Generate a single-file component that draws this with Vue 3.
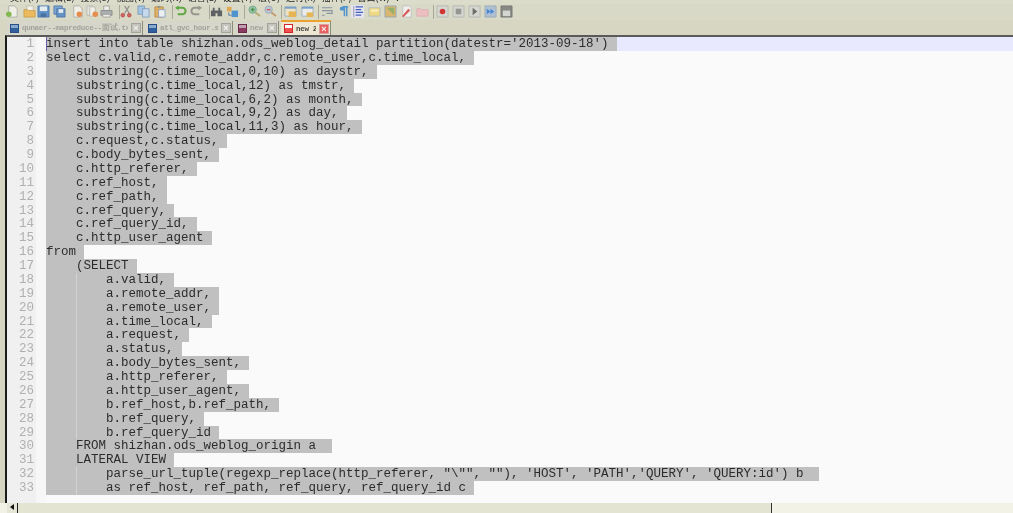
<script setup>
const menus = ['文件(F)', '编辑(E)', '搜索(S)', '视图(V)', '编码(N)', '语言(L)', '设置(T)', '宏(O)', '运行(R)', '插件(P)', '窗口(W)', '?']

const doc = { d: 'M3 1h6l3 3v9H3z', f: '#f4f4ee', s: '#9a9a9a' }
const floppy = [
  { d: 'M1 1h12v12H1z', f: '#4f86c6', s: '#2f5f9c' },
  { d: 'M3 1.5h8v5H3z', f: '#e8f0f8' },
  { d: 'M4 9h6v4H4z', f: '#2f5f9c' }
]
const icons = {
  new: [doc, { d: 'M0 10a3 3 0 1 0 6 0a3 3 0 1 0-6 0z', f: '#74b43c' }],
  open: [{ d: 'M4 1h7v6H4z', f: '#f6f6f0', s: '#b0b0a0' }, { d: 'M1 5h4l1 1h7v7H1z', f: '#eeb54a', s: '#c48b28' }],
  save: floppy,
  saveall: [{ d: 'M1 1h9v9H1z', f: '#6d9cd4', s: '#2f5f9c' }, { d: 'M4 4h9v9H4z', f: '#4f86c6', s: '#2f5f9c' }, { d: 'M6 4.5h5v4H6z', f: '#e8f0f8' }],
  close: [doc, { d: 'M6 10a3 3 0 1 0 6 0a3 3 0 1 0-6 0z', f: '#e8803a' }],
  closeall: [{ d: 'M1 1h6v10H1z', f: '#e8e8e4', s: '#a8a8a8' }, { d: 'M4 2h6v10H4z', f: '#f4f4ee', s: '#a8a8a8' }, { d: 'M7 10a3 3 0 1 0 6 0a3 3 0 1 0-6 0z', f: '#e8803a' }],
  print: [{ d: 'M4 1h6v5H4z', f: '#f0f0f0', s: '#8a8a8a' }, { d: 'M1 6h12v5H1z', f: '#a4a8ac', s: '#70757a' }, { d: 'M3 10h8v3H3z', f: '#eef0f0', s: '#8a8a8a' }],
  cut: [{ d: 'M10 1L5 9M5 1l5 8', s: '#8a8a8a', w: 1.4 }, { d: 'M1 11a2 2 0 1 0 4 0a2 2 0 1 0-4 0zM8 11a2 2 0 1 0 4 0a2 2 0 1 0-4 0z', f: '#d05050', s: '#b03030' }],
  copy: [{ d: 'M1 1h7v9H1z', f: '#9dc0ea', s: '#5f86b8' }, { d: 'M6 4h7v9H6z', f: '#c6daf2', s: '#5f86b8' }],
  paste: [{ d: 'M2 2h9v11H2z', f: '#e2a850', s: '#a87a30' }, { d: 'M5 1h3v2H5z', f: '#888' }, { d: 'M6 5h7v8H6z', f: '#eef3fa', s: '#6a8ab8' }],
  undo: [{ d: 'M4 3h5a3.5 3.5 0 0 1 0 7H4', s: '#4aa02c', w: 2.2 }, { d: 'M5 0.5L1 3l4 3z', f: '#4aa02c' }],
  redo: [{ d: 'M10 3H5a3.5 3.5 0 0 0 0 7h5', s: '#8c8c84', w: 2.2 }, { d: 'M9 0.5L13 3l-4 3z', f: '#8c8c84' }],
  find: [{ d: 'M1 6h5v6H1zM8 6h5v6H8zM3 3h2v3H3zM9 3h2v3H9zM5 6h4v3H5z', f: '#4a4e54' }],
  replace: [{ d: 'M1 2h5v5H1z', f: '#e0a040' }, { d: 'M6 6h7v7H6z', f: '#3a8ad0' }, { d: 'M3 8v3h3', s: '#3a6a90', w: 1 }],
  zoomin: [{ d: 'M1 5a4 4 0 1 0 8 0a4 4 0 1 0-8 0z', f: '#8ec0a8', s: '#5a9a78' }, { d: 'M8 8l5 4', s: '#b0a060', w: 2 }, { d: 'M3 5h4M5 3v4', s: '#2e8a2e', w: 1.4 }],
  zoomout: [{ d: 'M1 5a4 4 0 1 0 8 0a4 4 0 1 0-8 0z', f: '#b4c4d8', s: '#8a9ab0' }, { d: 'M8 8l5 4', s: '#c09060', w: 2 }, { d: 'M3 5h4', s: '#d04848', w: 1.4 }],
  syncv: [{ d: 'M1 2h12v10H1z', f: '#f2e6c4', s: '#7a98b8' }, { d: 'M1 2h12v2H1z', f: '#6a98cc' }, { d: 'M5 7h8v6H5z', f: '#eab040' }],
  synch: [{ d: 'M1 2h12v10H1z', f: '#eef0f2', s: '#7a98b8' }, { d: 'M1 2h12v2H1z', f: '#6a98cc' }, { d: 'M6 8h7v5H6z', f: '#eab040' }],
  wrap: [{ d: 'M1 3h11M1 6h11v3H6M1 11h3', s: '#7a8a9a', w: 1.2 }],
  chars: [{ d: 'M6 2h6M8 2v10M10.5 2v10', s: '#3a8ad0', w: 1.6 }, { d: 'M5 2h3v4H5a2 2 0 0 1 0-4z', f: '#3a8ad0' }],
  guide: [{ d: 'M0 0h14v14H0z', f: '#e8e8f8' }, { d: 'M3 1v12', s: '#8888a8', w: 1 }, { d: 'M5 2h8M5 5h6M5 8h8M5 11h6', s: '#2a4ac0', w: 1.4 }],
  mapdoc: [{ d: 'M1 3h12v9H1z', f: '#f4d878', s: '#9ab0c8' }, { d: 'M3 5h8v2H3z', f: '#fff4c0' }],
  map: [{ d: 'M1 1h12v12H1z', f: '#d8b060', s: '#7a98b8' }, { d: 'M3 3l8 8v-8z', f: '#88a858' }],
  fnlist: [{ d: 'M3 1h7l2 2v10H3z', f: '#f4f4f4', s: '#b8b8b8' }, { d: 'M2 12L9 4l2 2-7 7z', f: '#d84848' }],
  folder: [{ d: 'M1 4h4l1 1h7v7H1z', f: '#f0bcc0', s: '#d8a0a8' }],
  rec: [{ d: 'M1 1h12v12H1z', f: '#d4d6d4', s: '#a8a8a4' }, { d: 'M4 7a3 3 0 1 0 6 0a3 3 0 1 0-6 0z', f: '#d01818' }],
  stop: [{ d: 'M1 1h12v12H1z', f: '#d4d6d4', s: '#a8a8a4' }, { d: 'M4 4h6v6H4z', f: '#8a8a88' }],
  play: [{ d: 'M1 1h12v12H1z', f: '#d4d6d4', s: '#a8a8a4' }, { d: 'M5 3l5 4-5 4z', f: '#5c5c58' }],
  multi: [{ d: 'M1 1h12v12H1z', f: '#a8bcd4', s: '#8a9cb0' }, { d: 'M3 4l4 3-4 3zM7 4l4 3-4 3z', f: '#2a78d8' }],
  savem: [{ d: 'M1 1h12v12H1z', f: '#7a7c7a', s: '#5c5c5a' }, { d: 'M3 6h8v6H3z', f: '#d4d6d4' }]
}

const rawBar = [
  ['new', 13], ['open', 30], ['save', 44], ['saveall', 60], ['close', 78], ['closeall', 93], ['print', 107], ['|', 119],
  ['cut', 127], ['copy', 144], ['paste', 160], ['|', 172], ['undo', 181], ['redo', 197], ['|', 209], ['find', 217],
  ['replace', 233], ['|', 244], ['zoomin', 255], ['zoomout', 271], ['|', 281], ['syncv', 291], ['synch', 308], ['|', 318],
  ['wrap', 328], ['chars', 344], ['guide', 358], ['mapdoc', 375], ['map', 391], ['fnlist', 407], ['folder', 423], ['|', 433],
  ['rec', 443], ['stop', 459], ['play', 475], ['multi', 491], ['savem', 507]
]
const bar = rawBar.map(([k, x], i) => ({ k, w: i < rawBar.length - 1 ? rawBar[i + 1][1] - x : 14, shapes: icons[k] || [] }))

const tabs = [
  { t: 'qunaer--mapreduce--面试.txt', w: 136, color: 'blue' },
  { t: 'atl_gvc_hour.sh', w: 88, color: 'blue' },
  { t: 'new 1', w: 44, color: 'maroon' },
  { t: 'new 2', w: 50, color: 'red', active: true }
]

const code = [
  ["insert into table shizhan.ods_weblog_detail partition(datestr='2013-09-18')", 0],
  ['select c.valid,c.remote_addr,c.remote_user,c.time_local,', 0],
  ['substring(c.time_local,0,10) as daystr,', 1],
  ['substring(c.time_local,12) as tmstr,', 1],
  ['substring(c.time_local,6,2) as month,', 1],
  ['substring(c.time_local,9,2) as day,', 1],
  ['substring(c.time_local,11,3) as hour,', 1],
  ['c.request,c.status,', 1],
  ['c.body_bytes_sent,', 1],
  ['c.http_referer,', 1],
  ['c.ref_host,', 1],
  ['c.ref_path,', 1],
  ['c.ref_query,', 1],
  ['c.ref_query_id,', 1],
  ['c.http_user_agent', 1],
  ['from', 0],
  ['(SELECT', 1],
  ['a.valid,', 2],
  ['a.remote_addr,', 2],
  ['a.remote_user,', 2],
  ['a.time_local,', 2],
  ['a.request,', 2],
  ['a.status,', 2],
  ['a.body_bytes_sent,', 2],
  ['a.http_referer,', 2],
  ['a.http_user_agent,', 2],
  ['b.ref_host,b.ref_path,', 2],
  ['b.ref_query,', 2],
  ['b.ref_query_id', 2],
  ['FROM shizhan.ods_weblog_origin a ', 1],
  ['LATERAL VIEW', 1],
  ['parse_url_tuple(regexp_replace(http_referer, "\\"", ""), \'HOST\', \'PATH\',\'QUERY\', \'QUERY:id\') b ', 2],
  ['as ref_host, ref_path, ref_query, ref_query_id c', 2]
].map(([text, level]) => ({ text: '    '.repeat(level) + text, level }))
</script>

<template>
  <div class="app">
    <div class="menu">
      <span v-for="m in menus" :key="m" class="menu-item">{{ m }}</span>
    </div>

    <div class="toolbar">
      <div v-for="(b, i) in bar" :key="i" class="slot" :style="{ width: b.w + 'px' }">
        <i v-if="b.k === '|'" class="sep"></i>
        <svg v-else class="icon" width="13" height="13" viewBox="0 0 14 14">
          <path
            v-for="(s, j) in b.shapes"
            :key="j"
            :d="s.d"
            :fill="s.f || 'none'"
            :stroke="s.s || 'none'"
            :stroke-width="s.w || 0.8"
          />
        </svg>
      </div>
    </div>

    <div class="tabs">
      <div
        v-for="t in tabs"
        :key="t.t"
        class="tab"
        :class="{ active: t.active }"
        :style="{ width: t.w + 'px' }"
      >
        <span class="tab-icon" :class="t.color"></span>
        <span class="tab-text">{{ t.t }}</span>
        <span class="tab-close">×</span>
      </div>
    </div>

    <div class="editor">
      <div class="gutter">
        <div v-for="(l, i) in code" :key="i" class="num">{{ i + 1 }}</div>
      </div>
      <div class="fold"></div>
      <div class="code">
        <i class="caret"></i>
        <div
          v-for="(l, i) in code"
          :key="i"
          class="row"
          :class="{ current: i === 0 }"
        >
          <span class="sel" :class="'lv' + l.level">{{ l.text }}</span>
        </div>
      </div>
    </div>

    <div class="hscroll">
      <span class="arrow"></span>
      <div class="thumb"></div>
    </div>
  </div>
</template>

<style scoped>
.app {
  width: 1013px;
  height: 513px;
  display: flex;
  flex-direction: column;
  overflow: hidden;
  background: #d6d6c3;
  filter: blur(0.6px);
  font-family: "Liberation Mono", monospace;
}
.menu {
  height: 4px;
  flex: none;
  display: flex;
  align-items: flex-end;
  gap: 6px;
  padding-left: 10px;
  overflow: hidden;
  background: #dcdccb;
}
.menu-item {
  font: 9px/12px "Noto Sans CJK SC", sans-serif;
  color: #222;
  white-space: nowrap;
  flex: none;
}
.toolbar {
  height: 16px;
  flex: none;
  display: flex;
  align-items: center;
  padding-left: 6px;
  background: #d9d9c7;
}
.slot {
  flex: none;
  height: 14px;
}
.icon {
  display: block;
  opacity: 0.85;
}
.sep {
  display: block;
  width: 1px;
  height: 14px;
  margin-left: 7px;
  background: #a8a898;
}
.tabs {
  height: 15px;
  flex: none;
  display: flex;
  align-items: stretch;
  gap: 2px;
  padding-left: 7px;
  background: #d6d6c3;
}
.tab {
  flex: none;
  box-sizing: border-box;
  display: flex;
  align-items: center;
  gap: 3px;
  margin-top: 1px;
  padding: 0 1px 0 3px;
  background: #d6d6ca;
  border-right: 1px solid #8c8c80;
  color: #a2a29c;
  font-size: 7.5px;
  font-weight: bold;
  overflow: hidden;
  white-space: nowrap;
}
.tab.active {
  margin-top: 0;
  background: #ece6d2;
  border-top: 2px solid #eca030;
  border-right: 1px solid #8c8c80;
  color: #4a4a44;
}
.tab-icon {
  flex: none;
  width: 9px;
  height: 9px;
  box-sizing: border-box;
  border: 1px solid #333;
  box-shadow: inset 0 3px 0 #8aa8cc;
}
.tab-icon.blue {
  background: #2f5f9c;
  border-color: #274f84;
}
.tab-icon.maroon {
  background: #8a3a60;
  border-color: #6a2a48;
  box-shadow: inset 0 3px 0 #c0a0b0;
}
.tab-icon.red {
  background: #f05050;
  border-color: #d02828;
  box-shadow: inset 0 3px 0 #fff;
}
.tab-text {
  flex: 1;
  min-width: 0;
  overflow: hidden;
  letter-spacing: -0.3px;
}
.tab-close {
  flex: none;
  width: 8px;
  height: 8px;
  font: bold 9px/8px "Liberation Sans", sans-serif;
  text-align: center;
  color: #f4f4f4;
  background: #c4c4bc;
  border: 1px solid #a4a49c;
}
.tab.active .tab-close {
  background: #e86060;
  border-color: #d8a0a0;
}
.editor {
  flex: 1;
  min-height: 0;
  display: flex;
  margin-left: 5px;
  border-left: 2px solid #1c1c1c;
  border-top: 2px solid #5a5a5a;
  background: #fafafa;
  overflow: hidden;
}
.gutter {
  width: 29px;
  flex: none;
  background: #f0f0f0;
}
.num {
  height: 13.88px;
  line-height: 15.88px;
  padding-right: 2px;
  text-align: right;
  font-size: 12.5px;
  color: #b0b0b0;
}
.fold {
  width: 10px;
  flex: none;
  background: #f7f7f7;
}
.code {
  flex: 1;
  min-width: 0;
  position: relative;
}
.caret {
  position: absolute;
  left: 0;
  top: 0;
  width: 1px;
  height: 14px;
  background: #6a5aa8;
}
.row {
  height: 13.88px;
  line-height: 15.88px;
  font-size: 12.5px;
  white-space: pre;
  color: #2c2c2c;
}
.row.current {
  background: #e8e8ff;
}
.sel {
  display: inline-block;
  height: 13.88px;
  vertical-align: top;
  padding-right: 8px;
  background-color: #c0c0c0;
}
.sel.lv2 {
  background-image: linear-gradient(#d2d2d2, #d2d2d2);
  background-repeat: no-repeat;
  background-size: 1px 100%;
  background-position: 30px 0;
}
.hscroll {
  height: 10px;
  flex: none;
  display: flex;
  align-items: stretch;
  padding-left: 7px;
  background: #f2f2e6;
}
.arrow {
  width: 11px;
  flex: none;
  position: relative;
  background: #e6e6d6;
  border-right: 1px solid #222;
  box-sizing: border-box;
}
.arrow::before {
  content: "";
  position: absolute;
  left: 3px;
  top: 1px;
  border: 3.5px solid transparent;
  border-right: 4px solid #111;
  border-left: 0;
}
.thumb {
  width: 754px;
  flex: none;
  box-sizing: border-box;
  background: #e4e4d2;
  border-right: 1px solid #333;
}
</style>

<style>
html,
body {
  margin: 0;
  background: #d6d6c3;
}
</style>
